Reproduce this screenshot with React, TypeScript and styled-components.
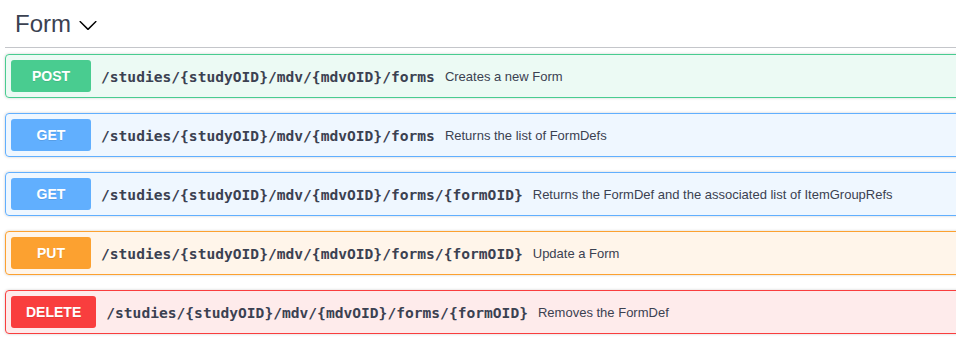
import React from "react";
import styled, { createGlobalStyle } from "styled-components";

const GlobalStyle = createGlobalStyle`
  html, body {
    margin: 0;
    padding: 0;
    background: #ffffff;
    overflow: hidden;
  }
  * { box-sizing: border-box; }
`;

type Method = "POST" | "GET" | "PUT" | "DELETE";

const palette: Record<Method, { main: string; bg: string }> = {
  POST: { main: "#49cc90", bg: "rgba(73,204,144,0.1)" },
  GET: { main: "#61affe", bg: "rgba(97,175,254,0.1)" },
  PUT: { main: "#fca130", bg: "rgba(252,161,48,0.1)" },
  DELETE: { main: "#f93e3e", bg: "rgba(249,62,62,0.1)" },
};

const Page = styled.div`
  width: 1100px;
  padding: 0 0 0 5px;
  font-family: "Liberation Sans", Arial, sans-serif;
  color: #3b4151;
`;

const TagHeader = styled.h3`
  display: flex;
  align-items: center;
  margin: 0 0 6px;
  padding: 10px 20px 10px 10px;
  font-size: 24px;
  line-height: 27px;
  font-weight: 400;
  color: #3b4151;
  border-bottom: 1px solid rgba(59, 65, 81, 0.3);
`;

const TagName = styled.span`
  display: inline-block;
`;

const ExpandButton = styled.span`
  display: inline-flex;
  margin-left: 7px;
  margin-top: 2px;
  color: #000;
`;

const Block = styled.div<{ $method: Method }>`
  margin: 0 0 15px;
  border: 1px solid ${(p) => palette[p.$method].main};
  background: ${(p) => palette[p.$method].bg};
  border-radius: 4px;
  box-shadow: 0 0 3px rgba(0, 0, 0, 0.19);
`;

const Summary = styled.div`
  display: flex;
  align-items: center;
  padding: 5px;
`;

const MethodBadge = styled.span<{ $method: Method }>`
  min-width: 80px;
  padding: 6px 15px;
  font-family: "Liberation Sans", Arial, sans-serif;
  font-size: 14px;
  line-height: 20px;
  font-weight: 700;
  text-align: center;
  color: #fff;
  border-radius: 3px;
  background: ${(p) => palette[p.$method].main};
  text-shadow: 0 1px 0 rgba(0, 0, 0, 0.1);
`;

const Path = styled.span`
  padding: 0 10px;
  font-family: "DejaVu Sans Mono", "Liberation Mono", monospace;
  font-size: 14.6px;
  font-weight: 700;
  color: #3b4151;
  white-space: nowrap;
`;

const Description = styled.span`
  font-family: "Liberation Sans", Arial, sans-serif;
  font-size: 13px;
  color: #3b4151;
  white-space: nowrap;
`;

const Chevron = () => (
  <svg width="20" height="20" viewBox="0 0 20 20" fill="currentColor" aria-hidden="true">
    <path d="M17.418 6.109c.272-.268.709-.268.979 0s.271.701 0 .969l-7.908 7.83c-.27.268-.707.268-.979 0l-7.908-7.83c-.27-.268-.27-.701 0-.969.271-.268.709-.268.979 0L10 13.25l7.418-7.141z" />
  </svg>
);

const ops: { method: Method; path: string; desc: string }[] = [
  { method: "POST", path: "/studies/{studyOID}/mdv/{mdvOID}/forms", desc: "Creates a new Form" },
  { method: "GET", path: "/studies/{studyOID}/mdv/{mdvOID}/forms", desc: "Returns the list of FormDefs" },
  {
    method: "GET",
    path: "/studies/{studyOID}/mdv/{mdvOID}/forms/{formOID}",
    desc: "Returns the FormDef and the associated list of ItemGroupRefs",
  },
  { method: "PUT", path: "/studies/{studyOID}/mdv/{mdvOID}/forms/{formOID}", desc: "Update a Form" },
  { method: "DELETE", path: "/studies/{studyOID}/mdv/{mdvOID}/forms/{formOID}", desc: "Removes the FormDef" },
];

export default function App() {
  return (
    <>
      <GlobalStyle />
      <Page>
        <TagHeader>
          <TagName>Form</TagName>
          <ExpandButton>
            <Chevron />
          </ExpandButton>
        </TagHeader>
        {ops.map((op, i) => (
          <Block key={i} $method={op.method}>
            <Summary>
              <MethodBadge $method={op.method}>{op.method}</MethodBadge>
              <Path>{op.path}</Path>
              <Description>{op.desc}</Description>
            </Summary>
          </Block>
        ))}
      </Page>
    </>
  );
}
